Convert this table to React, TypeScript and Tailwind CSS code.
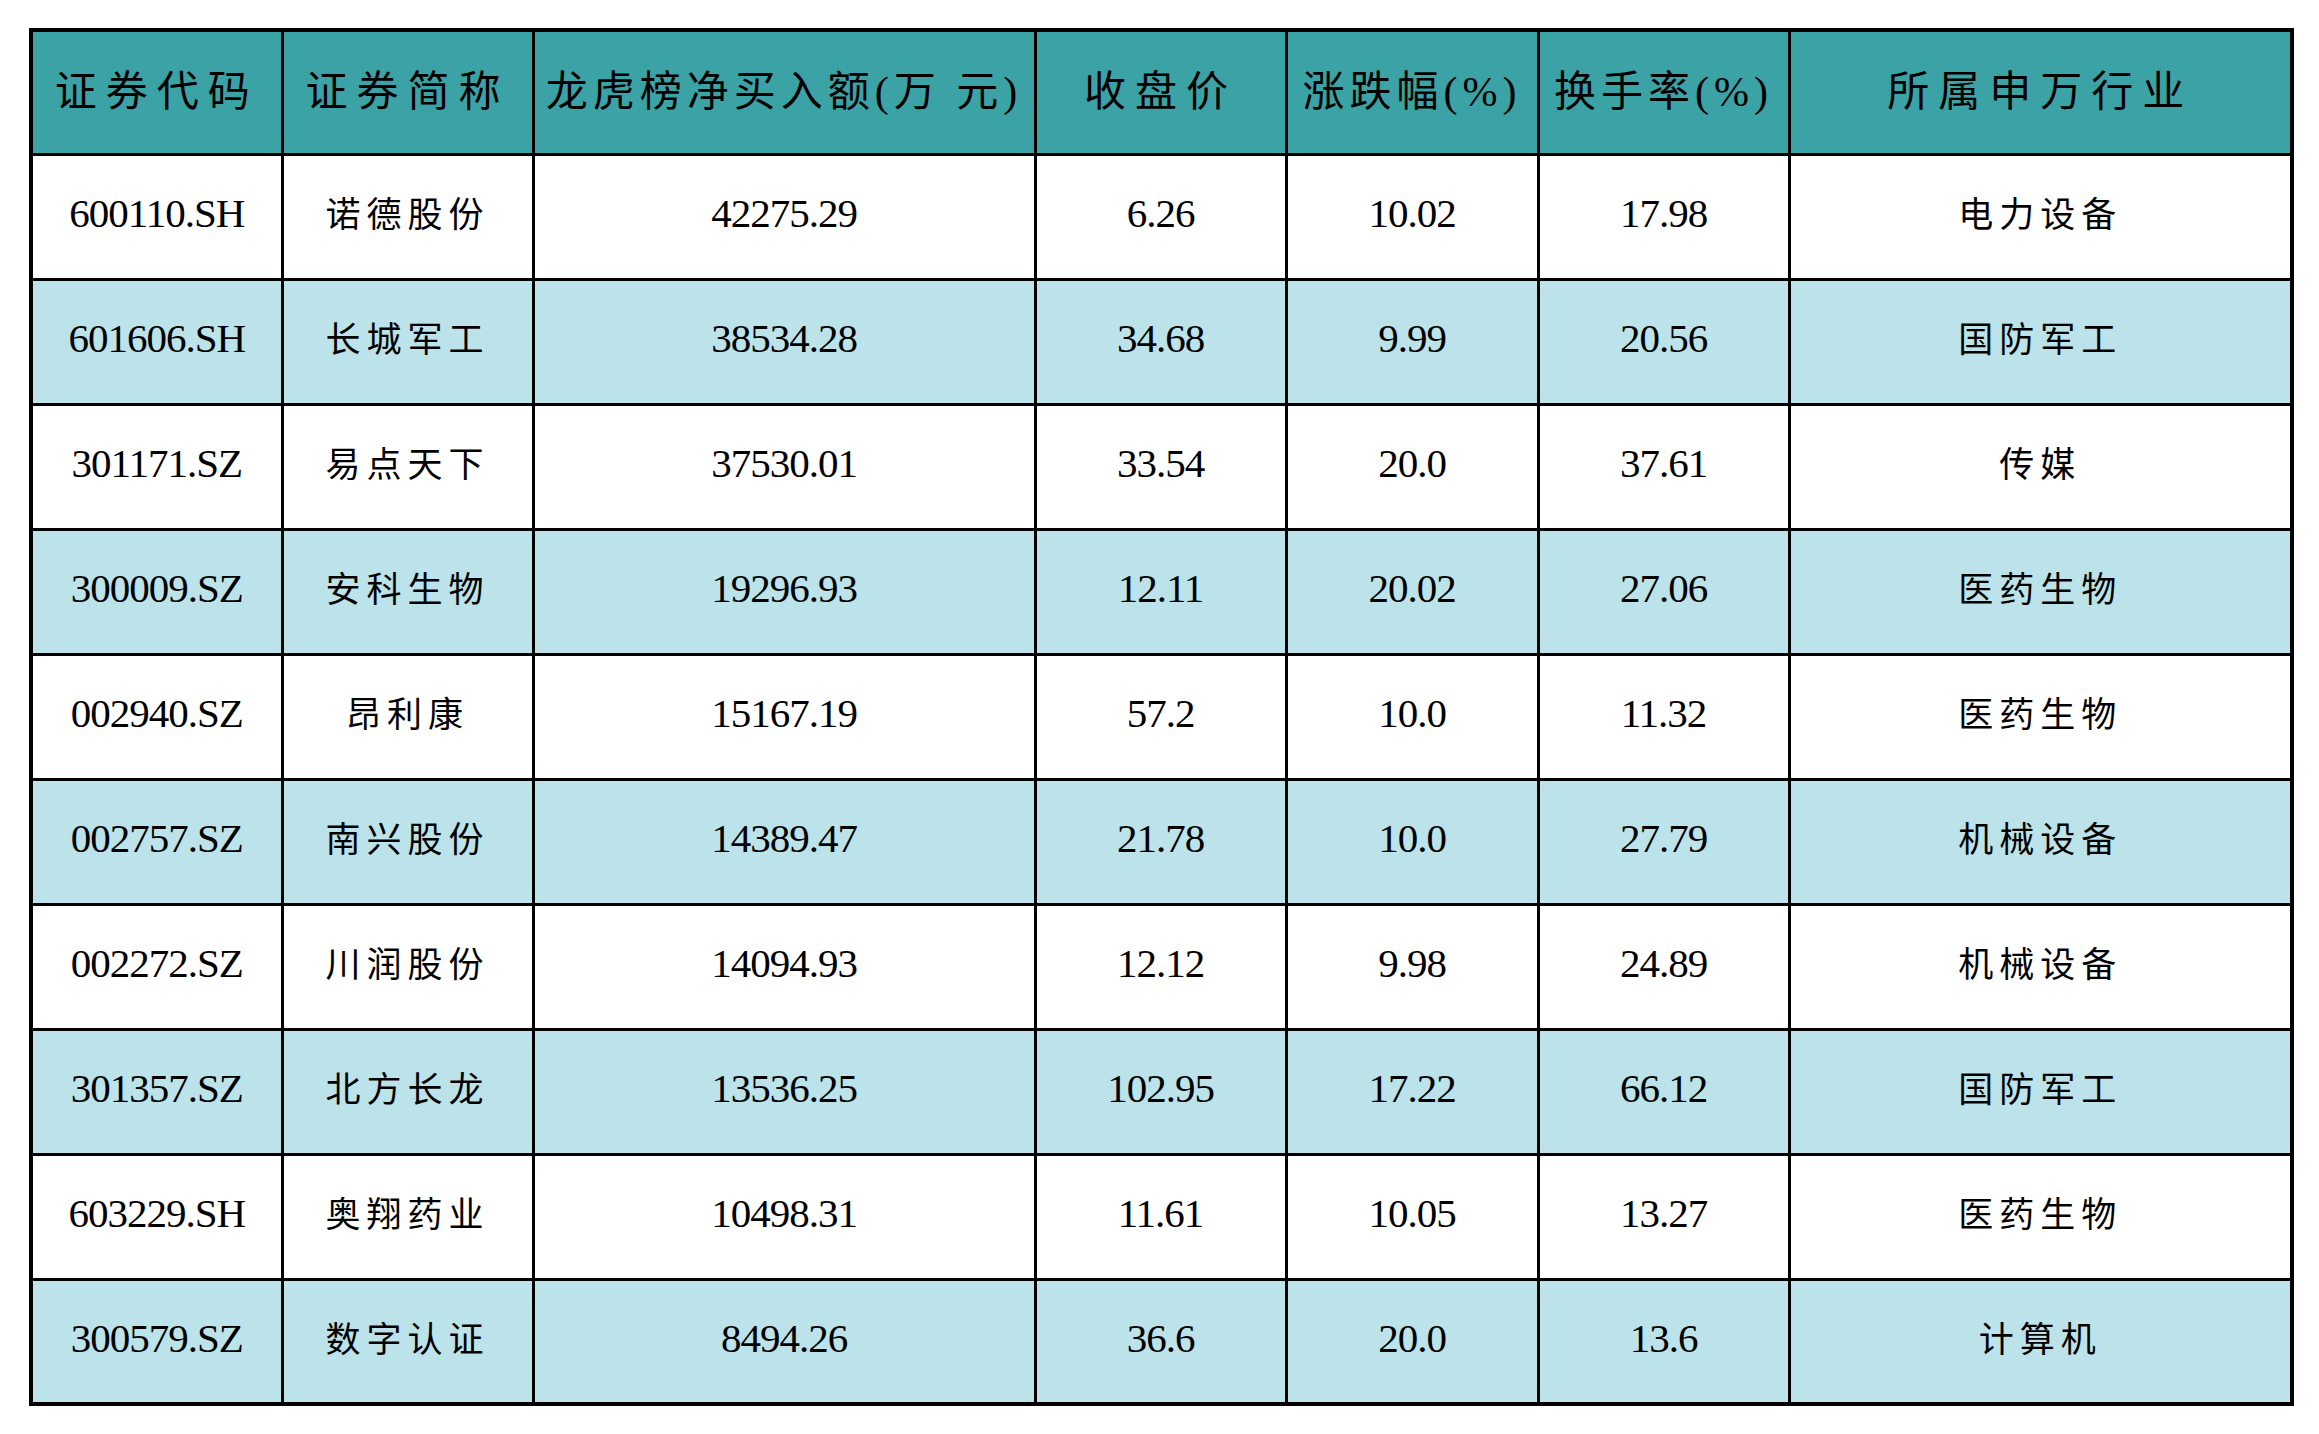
const headers = [
  "证券代码",
  "证券简称",
  "龙虎榜净买入额(万 元)",
  "收盘价",
  "涨跌幅(%)",
  "换手率(%)",
  "所属申万行业",
];

const rows: string[][] = [
  ["600110.SH", "诺德股份", "42275.29", "6.26", "10.02", "17.98", "电力设备"],
  ["601606.SH", "长城军工", "38534.28", "34.68", "9.99", "20.56", "国防军工"],
  ["301171.SZ", "易点天下", "37530.01", "33.54", "20.0", "37.61", "传媒"],
  ["300009.SZ", "安科生物", "19296.93", "12.11", "20.02", "27.06", "医药生物"],
  ["002940.SZ", "昂利康", "15167.19", "57.2", "10.0", "11.32", "医药生物"],
  ["002757.SZ", "南兴股份", "14389.47", "21.78", "10.0", "27.79", "机械设备"],
  ["002272.SZ", "川润股份", "14094.93", "12.12", "9.98", "24.89", "机械设备"],
  ["301357.SZ", "北方长龙", "13536.25", "102.95", "17.22", "66.12", "国防军工"],
  ["603229.SH", "奥翔药业", "10498.31", "11.61", "10.05", "13.27", "医药生物"],
  ["300579.SZ", "数字认证", "8494.26", "36.6", "20.0", "13.6", "计算机"],
];

const colWidths = ["w-[251px]", "w-[251px]", "w-[502px]", "w-[251px]", "w-[252px]", "w-[251px]", "w-[503px]"];

// pure chinese text (no digits / brackets)
const isCjk = (s: string) => /^[\u4e00-\u9fff]+$/.test(s);

export default function App() {
  return (
    <div className="min-h-screen bg-white pl-[29px] pt-[28px] font-['Liberation_Serif','Noto_Sans_CJK_SC',serif] text-black">
      <table className="table-fixed border-collapse border-[4px] border-black w-[2262px]">
        <colgroup>
          {colWidths.map((w, i) => (
            <col key={i} className={w} />
          ))}
        </colgroup>
        <thead>
          <tr className="h-[124px] bg-[#3ba3a6]">
            {headers.map((h) => (
              <th
                key={h}
                className={`border-[3px] border-black text-center align-middle text-[42px] font-normal ${
                  isCjk(h) ? "tracking-[9px]" : "tracking-[5px]"
                }`}
              >
                {h}
              </th>
            ))}
          </tr>
        </thead>
        <tbody>
          {rows.map((r, i) => (
            <tr key={r[0]} className={`h-[125px] ${i % 2 === 0 ? "bg-white" : "bg-[#bce3e9]"}`}>
              {r.map((c, j) => (
                <td
                  key={j}
                  className={`border-[3px] border-black text-center align-middle ${
                    isCjk(c) ? "text-[35px] tracking-[6px]" : "text-[41px] tracking-[-1px] pb-[6px]"
                  }`}
                >
                  {c}
                </td>
              ))}
            </tr>
          ))}
        </tbody>
      </table>
    </div>
  );
}
